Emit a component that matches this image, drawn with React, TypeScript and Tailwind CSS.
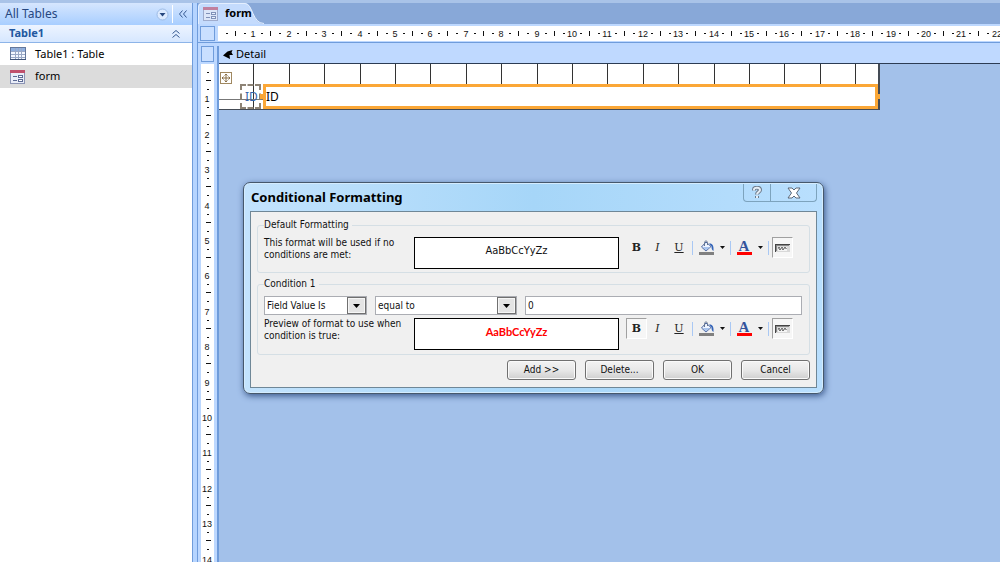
import React from "react";

// pixels per ruler centimetre
const CM = 35.4;

const TableIcon: React.FC<{}> = () => (
  <svg width="16" height="14" viewBox="0 0 16 14" aria-hidden="true">
    <rect x="0.5" y="0.5" width="15" height="12" fill="#f4f8ff" stroke="#64789c" />
    <rect x="1" y="1" width="14" height="3" fill="#8fb0e0" />
    <path d="M1 4.5h14M1 7.5h14M1 10.5h14M5.5 1v12M8.5 1v12M11.5 1v12" stroke="#9aa9c6" />
    <path d="M0 12.5h16" stroke="#3f5478" />
  </svg>
);

const FormIcon: React.FC<{ faded?: boolean }> = ({ faded }) => (
  <svg width="15" height="14" viewBox="0 0 15 14" opacity={faded ? 0.65 : 1} aria-hidden="true">
    <rect x="0.5" y="0.5" width="14" height="13" fill="#e9edf8" stroke="#8c94b4" />
    <rect x="0" y="0" width="15" height="3" fill="#c0506c" />
    <path d="M3 6.5h4M3 10.5h4" stroke="#5c6a94" />
    <rect x="8.5" y="5.5" width="4" height="2" fill="#fff" stroke="#5c6a94" />
    <rect x="8.5" y="9.5" width="4" height="2" fill="#fff" stroke="#5c6a94" />
  </svg>
);

const HorizontalRuler: React.FC<{}> = () => (
  <svg className="block h-[15px] w-full bg-white" aria-hidden="true">
    {Array.from({ length: 23 }, (_, i) => {
      const x = Math.round(i * CM);
      return (
        <g key={i} fill="#111">
          {i > 0 && (
            <text x={x} y="11" textAnchor="middle" fontSize="9" fontFamily="Liberation Sans, sans-serif">
              {i}
            </text>
          )}
          <rect x={x + 8} y="7" width="2" height="1" />
          <rect x={x + 17} y="5" width="1" height="5" />
          <rect x={x + 26} y="7" width="2" height="1" />
        </g>
      );
    })}
  </svg>
);

const VerticalRuler: React.FC<{}> = () => (
  <svg className="block min-h-0 w-[13px] flex-1 bg-white" aria-hidden="true">
    {Array.from({ length: 15 }, (_, i) => {
      const y = Math.round(i * CM);
      return (
        <g key={i} fill="#111">
          {i > 0 && (
            <text x="6" y={y + 3} textAnchor="middle" fontSize="9" fontFamily="Liberation Sans, sans-serif">
              {i}
            </text>
          )}
          <rect x="6" y={y + 8} width="2" height="1" />
          <rect x="5" y={y + 16} width="5" height="1" />
          <rect x="6" y={y + 25} width="2" height="1" />
        </g>
      );
    })}
  </svg>
);

const Sidebar: React.FC<{}> = () => (
  <aside className="flex w-[193px] shrink-0 flex-col border-r border-[#6f9cdb] bg-white">
    <div className="flex h-[22px] items-center bg-gradient-to-b from-[#d6e6fe] to-[#a8ceff] pl-[5px] text-[#27477f]">
      <h1 className="flex-1 text-[12px]">All Tables</h1>
      <button type="button" aria-label="Choose category" className="mr-[3px]">
        <svg width="13" height="13" viewBox="0 0 13 13">
          <circle cx="6.5" cy="6.5" r="5.5" fill="#dceaff" stroke="#9dbbe6" />
          <path d="M3.5 5h6l-3 3.5z" fill="#27477f" />
        </svg>
      </button>
      <span className="h-[18px] w-px bg-white" />
      <button type="button" aria-label="Hide pane" className="mr-[5px] ml-[6px]">
        <svg width="8" height="8" viewBox="0 0 8 8" fill="none" stroke="#34588f">
          <path d="M3.5 0.5L0.5 4l3 3.5M7.5 0.5L4.5 4l3 3.5" />
        </svg>
      </button>
    </div>
    <button
      type="button"
      className="flex h-[18px] items-center justify-between border-b border-[#8db4e8] bg-gradient-to-b from-[#edf4ff] to-[#d6e7ff] pr-[12px] pl-[9px] text-[11px] font-bold text-[#2358a0]"
    >
      Table1
      <svg width="8" height="8" viewBox="0 0 8 8" fill="none" stroke="#34588f">
        <path d="M0.5 3.5L4 0.5l3.5 3M0.5 7.5L4 4.5l3.5 3" />
      </svg>
    </button>
    <ul className="text-[11px] text-black">
      <li className="flex h-[22px] items-center gap-[9px] pl-[10px]">
        <TableIcon />
        Table1 : Table
      </li>
      <li className="flex h-[23px] items-center gap-[10px] bg-[#dcdcdc] pl-[10px]">
        <FormIcon />
        form
      </li>
    </ul>
  </aside>
);

const FormSurface: React.FC<{}> = () => (
  <div className="relative h-[46px] w-[661px] border-r-2 border-b border-[#444b55] bg-white">
    <svg className="block h-full w-full" aria-hidden="true">
      {Array.from({ length: 18 }, (_, i) => (
        <rect key={i} x={Math.round((i + 1) * CM) - 1} y="0" width="1" height="45" fill="#333" />
      ))}
      <rect x="0" y="35" width="660" height="1" fill="#777" />
    </svg>
    <svg className="absolute top-[8px] left-[1px]" width="12" height="12" viewBox="0 0 12 12" aria-hidden="true">
      <rect x="0.5" y="0.5" width="11" height="11" fill="#fff" stroke="#a08860" />
      <path d="M6 2v8M2 6h8" stroke="#8a7048" />
      <path d="M4.5 3.5L6 2l1.5 1.5M4.5 8.5L6 10l1.5-1.5M3.5 4.5L2 6l1.5 1.5M8.5 4.5L10 6 8.5 7.5" fill="none" stroke="#8a7048" />
    </svg>
    <label
      htmlFor="id-field"
      className="absolute top-[20px] left-[21px] h-[25px] w-[21px] border-2 border-dashed border-[#8d8375] pl-[3px] text-[12px] leading-[21px] text-[#3565ac]"
    >
      ID
    </label>
    <span className="absolute top-[30px] left-[41px] h-[5px] w-[4px] bg-[#f9a635]" />
    <input
      id="id-field"
      defaultValue="ID"
      className="absolute top-[20px] left-[44px] h-[25px] w-[615px] border-[3px] border-[#fba737] bg-white text-[12px] leading-[19px] outline-none"
    />
    <span className="absolute top-[30px] left-[657px] h-[5px] w-[4px] bg-[#f9a635]" />
  </div>
);

const DropDown: React.FC<{ label: string; value: string; className: string }> = ({ label, value, className }) => (
  <div className={`relative h-[19px] ${className}`}>
    <select
      aria-label={label}
      className="block h-full w-full appearance-none border border-[#abadb3] bg-white pl-[2px] leading-[16px] outline-none"
    >
      <option>{value}</option>
    </select>
    <svg className="pointer-events-none absolute top-px right-px" width="19" height="17" viewBox="0 0 19 17" aria-hidden="true">
      <rect x="0.5" y="0.5" width="18" height="16" fill="#e4e4e4" stroke="#707070" />
      <rect x="1.5" y="1.5" width="16" height="14" fill="none" stroke="#f6f6f6" />
      <path d="M6 7h7l-3.5 4z" fill="#000" />
    </svg>
  </div>
);

const Separator: React.FC<{}> = () => <span className="block h-[14px] w-px bg-[#a9c8f4]" />;

const Arrow: React.FC<{}> = () => (
  <svg width="5" height="3" viewBox="0 0 5 3" aria-hidden="true">
    <path d="M0 0h5L2.5 3z" fill="#111" />
  </svg>
);

const pressed = "border-t-[#a0a0a0] border-l-[#a0a0a0] border-r-white border-b-white bg-[#f6f6f6]";

const FormatToolbar: React.FC<{ bold?: boolean }> = ({ bold }) => (
  <div className="flex h-[21px] items-center font-['DejaVu_Serif',serif] text-[11px] leading-[19px] text-[#222]">
    <button
      type="button"
      aria-pressed={!!bold}
      className={`h-[21px] w-[21px] border font-bold ${bold ? pressed : "border-transparent"}`}
    >
      B
    </button>
    <button type="button" className="h-[21px] w-[21px] italic">
      I
    </button>
    <button type="button" className="h-[21px] w-[22px] underline">
      U
    </button>
    <span className="w-[2px]" />
    <Separator />
    <button type="button" aria-label="Fill color" className="ml-[6px] flex items-center gap-[5px]">
      <svg width="16" height="16" viewBox="0 0 16 16">
        <rect x="0" y="12" width="15" height="3" fill="#808080" />
        <path d="M7 2L12 6.5L7 11L2.5 7z" fill="#eef4ff" stroke="#4a64a0" />
        <path d="M3.5 7h7.5L7 10.5z" fill="#a9c4ee" />
        <path d="M5.5 6V2.5c0-2 3-2 3 0V5" fill="none" stroke="#64748f" />
        <path d="M10 3.5c3-.5 5 1.5 4.5 7.500c-1.500-.5-2-2.500-2-4.500z" fill="#3464b8" />
      </svg>
      <Arrow />
    </button>
    <span className="ml-[5px]">
      <Separator />
    </span>
    <button type="button" aria-label="Font color" className="ml-[6px] flex items-center gap-[5px]">
      <svg width="16" height="16" viewBox="0 0 16 16">
        <text x="7" y="11" textAnchor="middle" fontSize="15" fontWeight="bold" fill="#34549c" fontFamily="Liberation Serif, serif">
          A
        </text>
        <rect x="0" y="12" width="15" height="3" fill="#f00" />
      </svg>
      <Arrow />
    </button>
    <span className="ml-[5px]">
      <Separator />
    </span>
    <button type="button" aria-label="Enabled" aria-pressed="true" className={`ml-[3px] flex h-[21px] w-[21px] items-center justify-center border ${pressed}`}>
      <svg width="15" height="8" viewBox="0 0 15 8">
        <rect x="0" y="0" width="15" height="8" fill="#d8d8d8" />
        <path d="M0 0.5h15M0.5 0v8" stroke="#444" />
        <path d="M1 1.5h13M1.5 1v6" stroke="#888" />
        <rect x="3" y="3" width="9" height="4" fill="#f4f4f4" />
        <path d="M3 3.5h8M4 5.5h6" stroke="#777" strokeDasharray="2 1" />
        <path d="M3 4.5h9" stroke="#999" />
      </svg>
    </button>
  </div>
);

const DialogButton: React.FC<{ children: React.ReactNode }> = ({ children }) => (
  <button
    type="button"
    className="h-[20px] w-[69px] rounded-[3px] border border-[#707070] bg-gradient-to-b from-[#f3f3f3] via-[#e8e8e8] to-[#cfcfcf] leading-[18px] shadow-[inset_0_0_0_1px_#fafafa]"
  >
    {children}
  </button>
);

const ConditionalFormatting: React.FC<{}> = () => (
  <div
    role="dialog"
    aria-labelledby="dialog-title"
    className="absolute top-[182px] left-[243px] w-[581px] rounded-[7px] border border-[#46586c] bg-gradient-to-r from-[#c3e3fd] via-[#a6d6f8] to-[#b9dffe] px-[6px] pt-px pb-[5px] shadow-[1px_2px_6px_#3c5a8c,inset_0_0_0_1px_#d4ecfe]"
  >
    <div className="flex h-[27px] justify-between pl-px">
      <h2 id="dialog-title" className="pt-[3px] text-[13px] leading-[20px] font-bold text-black">
        Conditional Formatting
      </h2>
      <div className="flex h-[18px] rounded-b-[4px] border border-t-0 border-[#7da3bd]">
        <button type="button" aria-label="Help" className="flex w-[27px] items-center justify-center border-r border-[#7da3bd]">
          <svg width="10" height="13" viewBox="0 0 10 13" fill="none">
            <path d="M2 4.500V3.500c0-2.500 6-2.500 6 .5c0 2-3 2-3 4.500M5 10v2" stroke="#6d7a8a" strokeWidth="4" />
            <path d="M2 4.500V3.500c0-2.500 6-2.500 6 .5c0 2-3 2-3 4.500M5 10v2" stroke="#e6eef6" strokeWidth="2" />
          </svg>
        </button>
        <button type="button" aria-label="Close" className="flex w-[45px] items-center justify-center">
          <svg width="14" height="12" viewBox="0 0 14 12">
            <path d="M1 1h4l2 2 2-2h4L9.500 6l3.500 5H9L7 9l-2 2H1l3.500-5z" fill="#fff" stroke="#5c6878" />
          </svg>
        </button>
      </div>
    </div>
    <form className="border border-[#6f8797] bg-[#f0f0f0] px-[6px] pt-[7px] pb-[7px] font-['DejaVu_Sans_Condensed','DejaVu_Sans',sans-serif] text-[10px] leading-[12px] text-[#111]">
      <fieldset className="min-w-0 rounded-[3px] border border-[#d5dfe5] px-[6px] pb-[3px]">
        <legend className="h-[12px] pr-[3px]">Default Formatting</legend>
        <div className="flex pt-[6px]">
          <p className="w-[150px] shrink-0">
            This format will be used if no
            <br />
            conditions are met:
          </p>
          <div className="mr-[7px] flex h-[32px] w-[205px] justify-center border border-black bg-white pt-[7px] text-[11px]">
            AaBbCcYyZz
          </div>
          <FormatToolbar />
        </div>
      </fieldset>
      <fieldset className="mt-[5px] min-w-0 rounded-[3px] border border-[#d5dfe5] px-[6px] pb-[4px]">
        <legend className="h-[12px] pr-[3px]">Condition 1</legend>
        <div className="flex pt-[6px] pr-[1px]">
          <DropDown label="Condition type" value="Field Value Is" className="mr-[8px] w-[103px]" />
          <DropDown label="Comparison" value="equal to" className="mr-[8px] w-[142px]" />
          <input
            aria-label="Value"
            defaultValue="0"
            className="h-[19px] min-w-0 flex-1 border border-[#abadb3] bg-white pl-[2px] outline-none"
          />
        </div>
        <div className="flex pt-[3px]">
          <p className="w-[150px] shrink-0">
            Preview of format to use when
            <br />
            condition is true:
          </p>
          <div className="mr-[7px] flex h-[32px] w-[205px] justify-center border border-black bg-white pt-[7px] font-['Lato',sans-serif] text-[11px] font-bold text-[#f00]">
            AaBbCcYyZz
          </div>
          <FormatToolbar bold />
        </div>
      </fieldset>
      <div className="mt-[5px] flex justify-end gap-[9px]">
        <DialogButton>Add &gt;&gt;</DialogButton>
        <DialogButton>Delete...</DialogButton>
        <DialogButton>OK</DialogButton>
        <DialogButton>Cancel</DialogButton>
      </div>
    </form>
  </div>
);

const App: React.FC<{}> = () => {
  return (
    <div className="relative flex h-screen flex-col overflow-hidden bg-[#a9c3e8] pt-[3px] font-['Noto_Sans',sans-serif] text-[11px]">
      <div className="flex min-h-0 flex-1">
        <Sidebar />
        <div className="w-[5px] shrink-0 border-r border-[#6f9cdb] bg-[#b5d4ff]" />
        <main className="flex min-w-0 flex-1 flex-col bg-[#bdd8ff]">
          <div className="h-[21px] bg-[#88a8d8]">
            <button type="button" className="relative flex h-[21px] w-[66px] items-center">
              <svg className="absolute inset-0" width="66" height="21" viewBox="0 0 66 21" aria-hidden="true">
                <path d="M0 21V4Q0 0 4 0H47C55 0 54 21 66 21z" fill="#c4dbfd" />
                <path d="M0.500 21V4Q0.500 0.500 4 0.500H47C55 0.500 54 20.500 66 20.500" fill="none" stroke="#e4efff" />
              </svg>
              <span className="relative flex items-center gap-[7px] pl-[5px] font-bold text-black">
                <FormIcon faded />
                form
              </span>
            </button>
          </div>
          <div className="flex h-[19px] items-end gap-[3px] border-b border-[#6f9cdb] pb-px pl-[2px]">
            <div className="h-[15px] w-[15px] shrink-0 border border-[#6f9cdb] bg-[#c9dfff]" />
            <div className="min-w-0 flex-1">
              <HorizontalRuler />
            </div>
          </div>
          <div className="flex min-h-0 flex-1 pt-[3px]">
            <div className="flex w-[21px] shrink-0 flex-col items-center border-r-2 border-[#6f9cdb]">
              <div className="mb-[2px] h-[16px] w-[13px] shrink-0 border border-[#6f9cdb] bg-[#c9dfff]" />
              <VerticalRuler />
            </div>
            <section className="min-w-0 flex-1 bg-[#a3c1ea]">
              <h2 className="flex h-[18px] items-center gap-[3px] border-b border-[#2c3c54] bg-[#bfd9ff] pl-[4px] text-[11px] text-black">
                <svg width="10" height="9" viewBox="0 0 10 9" aria-hidden="true">
                  <path d="M9.500 0L8.500 2.500L10 5H6.500L7 9L0 5.500L4.500 1.500z" fill="#000" />
                </svg>
                Detail
              </h2>
              <FormSurface />
            </section>
          </div>
        </main>
      </div>
      <ConditionalFormatting />
    </div>
  );
};

export default App;
